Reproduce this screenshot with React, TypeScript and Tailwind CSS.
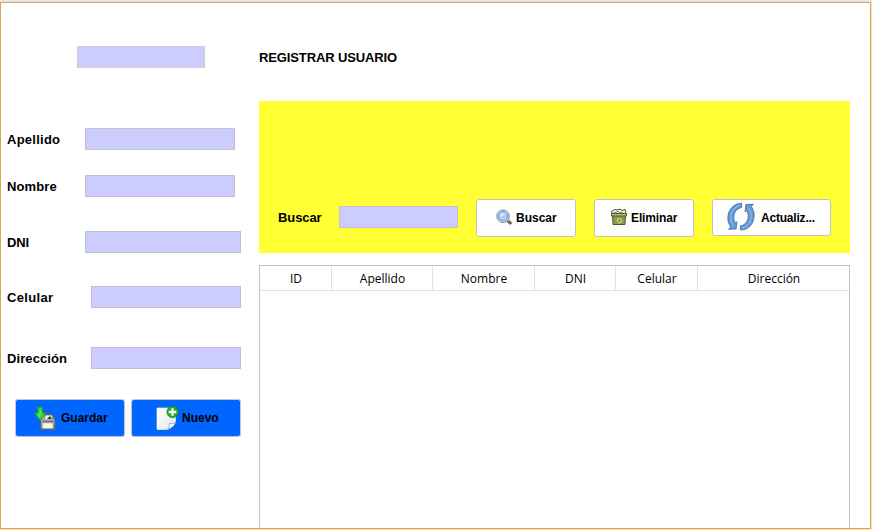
import type { ReactNode } from "react";

function Field({ className }: { className: string }) {
  return (
    <input
      type="text"
      className={`block h-[22px] shrink-0 border border-[#c2c2cc] bg-[#ccccff] px-1 outline-none ${className}`}
    />
  );
}

function FormRow({ label, className, labelClass, fieldClass }: { label: string; className: string; labelClass: string; fieldClass: string }) {
  return (
    <label className={`flex h-[22px] items-center pl-1.5 text-[13px] font-bold ${className}`}>
      <span className={`shrink-0 pt-0.5 ${labelClass}`}>{label}</span>
      <Field className={fieldClass} />
    </label>
  );
}

function Button({ className, icon, children }: { className: string; icon: ReactNode; children: ReactNode }) {
  return (
    <button className={`flex shrink-0 items-center rounded-[3px] border text-[12px] font-bold whitespace-nowrap ${className}`}>
      {icon}
      <span>{children}</span>
    </button>
  );
}

function SaveIcon() {
  return (
    <svg width="24" height="26" viewBox="0 0 24 26" className="shrink-0">
      <defs>
        <linearGradient id="disk" x1="0" y1="0" x2="0" y2="1">
          <stop offset="0" stopColor="#d8d8d8" />
          <stop offset="1" stopColor="#777777" />
        </linearGradient>
        <linearGradient id="arrow" x1="0" y1="0" x2="1" y2="1">
          <stop offset="0" stopColor="#159a20" />
          <stop offset=".5" stopColor="#42ed3b" />
          <stop offset="1" stopColor="#118a19" />
        </linearGradient>
      </defs>
      <path d="M7.5 24.5V15l3.5-5.5h8l3 5.5v9.500z" fill="url(#disk)" stroke="#625f60" />
      <path d="M12.500 10h6.500l1 5h-9z" fill="#eeeeee" stroke="#666" strokeWidth=".7" />
      <path d="M14 14l3-3 2 3z" fill="#333" />
      <path d="M9 16.500h12" stroke="#7d6f6c" />
      <path d="M9.500 18h10.500v5.500H9.500z" fill="#f5f5f5" stroke="#999" strokeWidth=".5" />
      <path d="M4.500 2h5v6H13L7.500 16 1.500 8h3z" fill="url(#arrow)" stroke="#198d35" strokeWidth=".7" />
    </svg>
  );
}

function NewIcon() {
  return (
    <svg width="24" height="26" viewBox="0 0 24 26" className="shrink-0">
      <defs>
        <linearGradient id="paper" x1="0" y1="0" x2="1" y2="1">
          <stop offset="0" stopColor="#fff" />
          <stop offset="1" stopColor="#e4e8ea" />
        </linearGradient>
      </defs>
      <path d="M2 3h18.500v14c-2 5-5 6-8 7.500H2z" fill="url(#paper)" stroke="#e7eef5" strokeWidth=".7" />
      <path d="M12.500 24.500c2-2 2-4 2-6 3 .5 5-.5 6-1.500-1 4-4 6-8 7.500z" fill="#fff" stroke="#83909b" strokeWidth=".7" />
      <circle cx="17.500" cy="7" r="5.700" fill="#20ad23" stroke="#128c18" strokeWidth=".7" />
      <path d="M17.500 3.200v7.600M13.700 7h7.600" stroke="#fff" strokeWidth="2.300" />
    </svg>
  );
}

function SearchIcon() {
  return (
    <svg width="16" height="16" viewBox="0 0 16 16" className="shrink-0 -translate-y-px">
      <path d="M11 11l3.200 2.900" stroke="#555c65" strokeWidth="3.200" strokeLinecap="round" />
      <path d="M11 10.500l3 2.800" stroke="#b8bec4" strokeWidth="1" />
      <circle cx="7" cy="7.200" r="6.300" fill="#f0f5fa" stroke="#76869b" />
      <circle cx="7" cy="7.200" r="4.700" fill="#a8cef5" stroke="#688cbd" />
      <path d="M4 8c0-3 2-4 5-4-1 2-2 3-5 4z" fill="#d9edff" />
    </svg>
  );
}

function TrashIcon() {
  return (
    <svg width="17" height="18" viewBox="0 0 17 18" className="shrink-0 -translate-x-px -translate-y-px">
      <path d="M2.500 6L1.500 3.500l3-2 2.500.5 3-1 2 1.500 3-1 1 3-1 2z" fill="#eceee2" stroke="#454d36" />
      <path d="M4 4l2 1 2-2 2 2 2-1 1 1" fill="none" stroke="#626c54" strokeWidth=".8" />
      <path d="M2.500 7.500h13l-.5 9h-12z" fill="#8c9c4e" stroke="#4d592d" />
      <path d="M1.500 5.500h15v2.500h-15z" fill="#b4bd78" stroke="#4d592d" />
      <path d="M7 12l2-2 2 2M12 12l-1 2.500-3 .5M7 12l1 2" fill="none" stroke="#dae4a9" />
    </svg>
  );
}

function RefreshIcon() {
  return (
    <svg width="28" height="28" viewBox="0 0 28 28" className="shrink-0 -translate-y-[1.5px]">
      <g fill="#6799d6" stroke="#3c669f" strokeWidth=".8" strokeLinejoin="round">
        <path d="M14.600.6v4.600C7.500 5.500 4.600 15.500 8.600 20.500l1.300-1.300-.8 7.300-7.600.2 2.300-2C-2.500 16 1.500 1.500 14.600.6z" />
        <path d="M13.400 27.900v-4.600c7.100-.3 10-10.300 6-15.300l-1.300 1.300.8-7.300 7.600-.2-2.300 2c6.300 8.700 2.300 23.200-10.800 24.100z" />
      </g>
      <path d="M13.200 2.800C3.500 5 1.500 16 6.500 23.500M14.800 25.700c9.700-2.200 11.700-13.200 6.700-20.700" fill="none" stroke="#8ab6ee" strokeWidth="1.200" />
    </svg>
  );
}

export default function App() {
  return (
    <div className="h-[530px] w-[872px] overflow-hidden bg-[#fbe3b5] font-['Liberation_Sans',Arial,sans-serif] text-black">
      <div className="h-0.5 bg-[#e2e4f6]" />
      <main className="flex h-[527px] w-[871px] border border-[#dda64b] bg-white">
        <section className="w-[258px] shrink-0 pt-[43px]">
          <Field className="ml-[76px] w-32 border-[#ccccd6]" />
          <FormRow label="Apellido" className="mt-[60px]" labelClass="w-[78px] tracking-[0.25px]" fieldClass="w-[150px]" />
          <FormRow label="Nombre" className="mt-[25px]" labelClass="w-[78px] tracking-[0.1px]" fieldClass="w-[150px]" />
          <FormRow label="DNI" className="mt-[34px]" labelClass="w-[78px] tracking-[-0.2px]" fieldClass="w-[156px]" />
          <FormRow label="Celular" className="mt-[33px]" labelClass="w-[84px] tracking-[0.35px]" fieldClass="w-[150px]" />
          <FormRow label="Dirección" className="mt-[39px]" labelClass="w-[84px] tracking-[0.1px]" fieldClass="w-[150px]" />
          <div className="mt-[30px] flex gap-1.5 pl-3.5">
            <Button className="h-[38px] w-[110px] gap-1 border-[#b7c7e2] bg-[#0066ff] pl-[17px]" icon={<SaveIcon />}>Guardar</Button>
            <Button className="h-[38px] w-[110px] gap-[3px] border-[#b7c7e2] bg-[#0066ff] pl-[23px]" icon={<NewIcon />}>Nuevo</Button>
          </div>
        </section>

        <section className="flex w-[591px] shrink-0 flex-col">
          <h1 className="mt-[46px] h-[18px] text-[13px] leading-[18px] font-bold tracking-[-0.12px]">REGISTRAR USUARIO</h1>
          <div className="mt-[34px] flex h-[152px] shrink-0 items-start bg-[#ffff33] pt-[98px] pl-[19px]">
            <label className="mt-[7px] flex h-[22px] w-[198px] shrink-0 items-center text-[13px] font-bold">
              <span className="w-[61px] pt-0.5 tracking-[-0.1px]">Buscar</span>
              <Field className="w-[119px]" />
            </label>
            <Button className="h-[38px] w-[100px] gap-1 border-[#c2c2c2] bg-white pl-[19px]" icon={<SearchIcon />}>Buscar</Button>
            <Button className="ml-[18px] h-[38px] w-[100px] gap-[3px] border-[#c2c2c2] bg-white pl-4 tracking-[-0.12px]" icon={<TrashIcon />}>Eliminar</Button>
            <Button className="ml-[18px] h-[37px] w-[119px] gap-[6px] border-[#c2c2c2] bg-white pl-3.5 tracking-[-0.2px]" icon={<RefreshIcon />}>Actualiz...</Button>
          </div>
          <div className="mt-3 min-h-0 flex-1 border border-b-0 border-[#c0c0c0]">
            <div className="grid h-[25px] grid-cols-[72px_101px_102px_81px_82px_151px] border-b border-[#e1e1e1] font-['Open_Sans','Noto_Sans',sans-serif] text-[12px]">
              {["ID", "Apellido", "Nombre", "DNI", "Celular", "Dirección"].map((name) => (
                <span key={name} className="border-r border-[#e1e1e1] pt-px pl-px text-center leading-[24px] last:border-r-0">{name}</span>
              ))}
            </div>
          </div>
        </section>
      </main>
    </div>
  );
}
